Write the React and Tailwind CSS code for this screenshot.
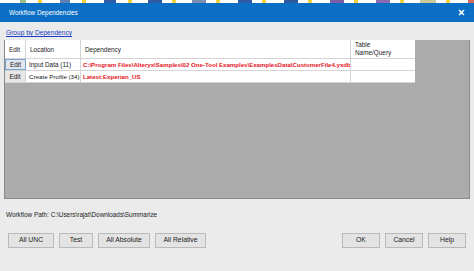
import React from "react";

const strip = [
  { w: 20, c: "#ffffff" }, { w: 6, c: "#9bbf8a" }, { w: 12, c: "#ffffff" }, { w: 4, c: "#f2d43a" },
  { w: 18, c: "#ffffff" }, { w: 10, c: "#5b7fb3" }, { w: 12, c: "#ffffff" }, { w: 4, c: "#f2d43a" },
  { w: 18, c: "#ffffff" }, { w: 12, c: "#2f5ea8" }, { w: 12, c: "#ffffff" }, { w: 4, c: "#f2d43a" },
  { w: 16, c: "#ffffff" }, { w: 14, c: "#2d5aa0" }, { w: 10, c: "#ffffff" }, { w: 4, c: "#f2d43a" },
  { w: 16, c: "#ffffff" }, { w: 14, c: "#7d8fb0" }, { w: 10, c: "#ffffff" }, { w: 4, c: "#f2d43a" },
  { w: 18, c: "#ffffff" }, { w: 14, c: "#2e5aa6" }, { w: 10, c: "#ffffff" }, { w: 4, c: "#f2d43a" },
  { w: 18, c: "#ffffff" }, { w: 14, c: "#2c5a9e" }, { w: 10, c: "#ffffff" }, { w: 4, c: "#f2d43a" },
  { w: 18, c: "#ffffff" }, { w: 14, c: "#7b5ea6" }, { w: 10, c: "#ffffff" }, { w: 4, c: "#f2d43a" },
  { w: 18, c: "#ffffff" }, { w: 14, c: "#8a6bb0" }, { w: 10, c: "#ffffff" }, { w: 4, c: "#f2d43a" },
  { w: 16, c: "#ffffff" }, { w: 16, c: "#c9c99a" }, { w: 10, c: "#ffffff" }, { w: 4, c: "#f2d43a" },
  { w: 18, c: "#ffffff" }, { w: 14, c: "#d46a5a" }, { w: 10, c: "#ffffff" }, { w: 4, c: "#f2d43a" },
  { w: 40, c: "#ffffff" },
];

function Btn({ children, w }) {
  return (
    <div
      className="h-[15px] flex items-center justify-center border border-[#b9b9b9] bg-[#e3e3e3] text-[6.8px] text-[#222]"
      style={{ width: w }}
    >
      {children}
    </div>
  );
}

export default function App() {
  const font = { fontFamily: '"Liberation Sans", Arial, sans-serif' };
  return (
    <div className="w-[474px] h-[271px] overflow-hidden bg-[#ebebeb] flex flex-col" style={font}>
      <div className="h-[3px] flex shrink-0">
        {strip.map((s, i) => (
          <div key={i} className="h-full shrink-0" style={{ width: s.w, background: s.c }} />
        ))}
      </div>
      <div className="h-[19px] shrink-0 bg-[#0b6fc5] flex items-center justify-between pl-[9px] pr-[9px]">
        <span className="text-white text-[6.4px]">Workflow Dependencies</span>
        <svg width="7" height="7" viewBox="0 0 7 7">
          <path d="M1 1 L6 6 M6 1 L1 6" stroke="#ffffff" strokeWidth="1.5" />
        </svg>
      </div>
      <div className="flex flex-col flex-1 px-[4px]">
        <div className="h-[18px] flex items-end pl-[2px] pb-[3px]">
          <span className="text-[6.6px] text-[#1a3fc0] underline leading-none">Group by Dependency</span>
        </div>
        <div className="h-[159px] bg-[#ababab] border border-[#8a8a8a] border-t-0">
          <div className="w-[410px] bg-white text-[6.4px] text-[#222]">
            <div className="flex h-[19px] border-b border-[#d4d4d4]">
              <div className="w-[21px] pl-[4px] pt-[5px] border-r border-[#d4d4d4]">Edit</div>
              <div className="w-[55px] pl-[4px] pt-[5px] border-r border-[#d4d4d4]">Location</div>
              <div className="w-[270px] pl-[4px] pt-[5px] border-r border-[#d4d4d4]">Dependency</div>
              <div className="flex-1 pl-[4px] pt-[1px] leading-[8px]">
                Table
                <br />
                Name/Query
              </div>
            </div>
            <div className="flex h-[12px] border-b border-[#d4d4d4]">
              <div className="w-[21px] flex items-center justify-center bg-[#e1e6ec] border border-[#7aa3cf]">Edit</div>
              <div className="w-[55px] pl-[3px] flex items-center border-r border-[#d4d4d4]">Input Data (11)</div>
              <div className="w-[270px] pl-[2px] flex items-center border-r border-[#d4d4d4] text-[#e5141c] font-bold text-[6.1px] whitespace-nowrap overflow-hidden">
                C:\Program Files\Alteryx\Samples\02 One-Tool Examples\ExamplesData\CustomerFile4.yxdb
              </div>
              <div className="flex-1" />
            </div>
            <div className="flex h-[12px] border-b border-[#d4d4d4]">
              <div className="w-[21px] flex items-center justify-center bg-[#e6e6e6] border-r border-[#d4d4d4]">Edit</div>
              <div className="w-[55px] pl-[3px] flex items-center border-r border-[#d4d4d4] whitespace-nowrap text-[6.2px]">Create Profile (34)</div>
              <div className="w-[270px] pl-[2px] flex items-center border-r border-[#d4d4d4] text-[#e5141c] font-bold text-[6.1px]">
                Latest:Experian_US
              </div>
              <div className="flex-1" />
            </div>
          </div>
        </div>
        <div className="h-[30px] flex items-center pl-[2px] pt-[2px] text-[6.4px] text-[#222]">
          Workflow Path: C:\Users\rajat\Downloads\Summarize
        </div>
        <div className="flex items-center justify-between pl-[4px] pr-[4px] mt-[4px]">
          <div className="flex gap-[5px]">
            <Btn w={46}>All UNC</Btn>
            <Btn w={34}>Test</Btn>
            <Btn w={52}>All Absolute</Btn>
            <Btn w={51}>All Relative</Btn>
          </div>
          <div className="flex gap-[5px]">
            <Btn w={38}>OK</Btn>
            <Btn w={38}>Cancel</Btn>
            <Btn w={38}>Help</Btn>
          </div>
        </div>
      </div>
    </div>
  );
}
